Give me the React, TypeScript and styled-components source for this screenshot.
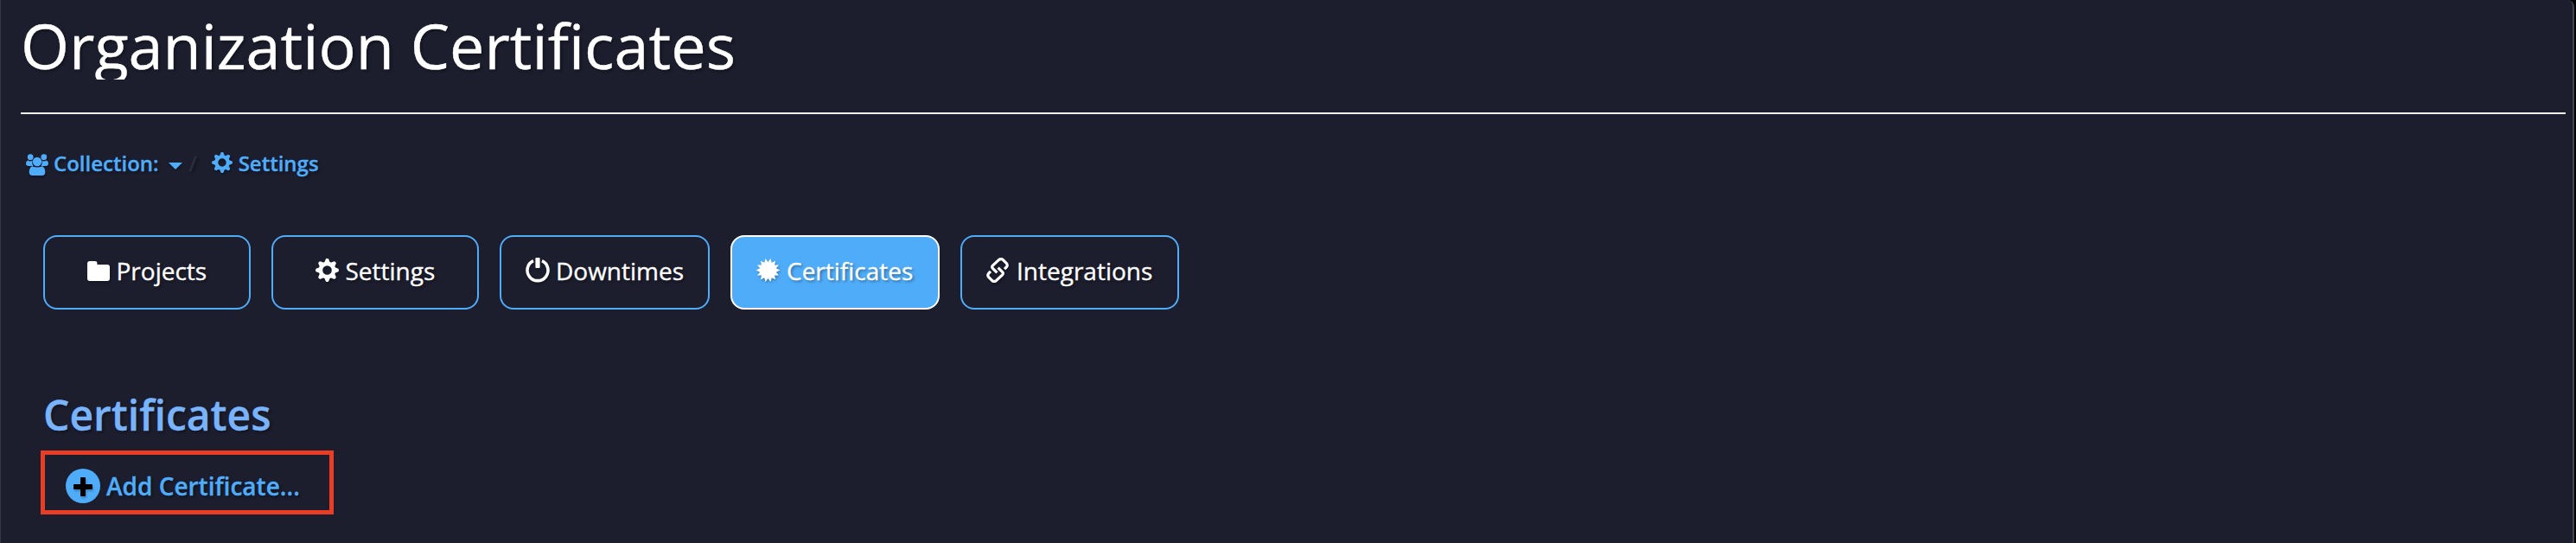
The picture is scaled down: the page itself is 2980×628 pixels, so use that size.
import React from "react";
import styled, { createGlobalStyle } from "styled-components";

const GlobalStyle = createGlobalStyle`
  * { box-sizing: border-box; }
  body { margin: 0; background: #000; font-family: "Open Sans", "Noto Sans", sans-serif; }
`;
const Panel = styled.main`
  width: 2978px;
  height: 628px;
  overflow: hidden;
  background: #1c1d2d;
  border-left: 1px solid #353645;
  border-right: 2px solid #41424f;
  border-top-right-radius: 8px;
  padding: 0 8px 0 23px;
  text-shadow: 2px 2px 3px rgba(0, 0, 0, 0.35);
  -webkit-text-stroke: 0.35px currentColor;
`;
const Header = styled.header`
  height: 132px;
  border-bottom: 2px solid #f3f5f3;
`;
const Title = styled.h1`
  margin: 0;
  height: 92px;
  overflow: hidden;
  font-size: 72px;
  line-height: 104px;
  font-weight: 400;
  color: #fff;
  white-space: nowrap;
`;
const Breadcrumb = styled.nav`
  display: flex;
  align-items: center;
  height: 36px;
  margin-top: 39px;
  padding-left: 6px;
  font-size: 24px;
  line-height: 36px;
  font-weight: 600;
  color: #4facf9;
`;
const CrumbLink = styled.a`
  display: flex;
  align-items: center;
  white-space: nowrap;
`;
const Slash = styled.span`
  width: 9px;
  margin: 0 17px 0 8px;
  font-weight: 400;
  color: #2f3040;
`;
const Icon = styled.svg<{ $w: number; $h: number; $gap?: number; $lift?: number }>`
  flex: none;
  width: ${(p) => p.$w}px;
  height: ${(p) => p.$h}px;
  margin-right: ${(p) => p.$gap ?? 0}px;
  margin-bottom: ${(p) => p.$lift ?? 0}px;
  fill: currentColor;
  overflow: visible;
  filter: drop-shadow(1px 2px 1px rgba(0, 0, 0, 0.25));
`;
const UsersIcon = styled(Icon)`
  margin-top: 2px;
`;
const Caret = styled(Icon)`
  margin: 6px 0 0 11px;
`;
const PlusIcon = styled(Icon)`
  margin-top: 2px;
`;
const Tabs = styled.div`
  display: flex;
  gap: 24px;
  margin: 65px 0 0 26px;
`;
const Tab = styled.button<{ $w: number; $active?: boolean }>`
  display: flex;
  align-items: center;
  justify-content: flex-start;
  width: ${(p) => p.$w}px;
  height: 86px;
  padding: 0 0 4px 28px;
  border: 2px solid ${(p) => (p.$active ? "#fff" : "#4facf9")};
  border-radius: 16px;
  background: ${(p) => (p.$active ? "#4facf9" : "transparent")};
  color: #fff;
  font: 400 28px/40px "Open Sans", "Noto Sans", sans-serif;
  text-shadow: inherit;
  white-space: nowrap;
`;
const Wide = styled(Tab)`
  padding-left: 48.5px;
`;
const Section = styled.section`
  margin: 90px 0 0 23px;
`;
const SectionTitle = styled.h2`
  margin: 0 0 9px 3px;
  font-size: 48px;
  line-height: 64px;
  font-weight: 600;
  color: #78b3fb;
`;
const Highlight = styled.div`
  display: flex;
  align-items: center;
  width: 339px;
  height: 74px;
  padding: 7px 0 0 24px;
  border: 5px solid #e93e25;
`;
const AddLink = styled.a`
  display: flex;
  align-items: center;
  font-size: 28px;
  line-height: 40px;
  font-weight: 600;
  color: #4facf9;
  white-space: nowrap;
`;
const PlusBadge = styled.span`
  display: grid;
  place-items: center;
  width: 40px;
  height: 40px;
  margin-right: 7px;
  border-radius: 50%;
  background: #4facf9;
  color: #000;
`;

const gearTeeth = [0, 45, 90, 135, 180, 225, 270, 315];
const Gear = ({ size, gap, lift }: { size: number; gap: number; lift: number }) => (
  <Icon $w={size} $h={size} $gap={gap} $lift={lift} viewBox="-13.5 -13.5 27 27">
    <circle r="7.6" fill="none" stroke="currentColor" strokeWidth="4.6" />
    {gearTeeth.map((a) => (
      <path key={a} transform={`rotate(${a})`} d="M-3.2-9 L-1.9-12.3 Q-1.7-13.4-.7-13.4 H.7 Q1.7-13.4 1.9-12.3 L3.2-9Z" />
    ))}
  </Icon>
);
const starPoints = Array.from({ length: 28 }, (_, i) => {
  const r = i % 2 ? 13.8 : 9.6;
  const a = (i * Math.PI) / 14;
  return `${(r * Math.sin(a)).toFixed(2)},${(-r * Math.cos(a)).toFixed(2)}`;
}).join(" ");

export default function App() {
  return (
    <>
      <GlobalStyle />
      <Panel>
        <Header>
          <Title>Organization Certificates</Title>
        </Header>
        <Breadcrumb>
          <CrumbLink>
            <UsersIcon $w={26} $h={25} $gap={6} viewBox="0 0 26 25">
              <circle cx="5.2" cy="3.7" r="3.4" />
              <circle cx="20.8" cy="3.7" r="3.4" />
              <path d="M2.3 7.6Q5 9.2 7.5 7.8Q6.6 11 8.4 14H3Q0 14 0 11Q0 8.5 2.3 7.6ZM23.7 7.6Q21 9.2 18.5 7.8Q19.4 11 17.6 14H23Q26 14 26 11Q26 8.5 23.7 7.6Z" />
              <circle cx="13" cy="9" r="5.2" />
              <path d="M7.2 14.2Q13 17 18.8 14.2Q22.3 16 22.3 21Q22.3 25 18.5 25H7.5Q3.7 25 3.7 21Q3.7 16 7.2 14.2Z" />
            </UsersIcon>
            Collection:
            <Caret $w={16} $h={8} viewBox="0 0 16 8">
              <path d="M0 0H16L8 8Z" />
            </Caret>
          </CrumbLink>
          <Slash>/</Slash>
          <CrumbLink>
            <Gear size={24} gap={7} lift={2} />
            Settings
          </CrumbLink>
        </Breadcrumb>
        <Tabs>
          <Wide $w={240}>
            <Icon $w={26} $h={23} $gap={8} viewBox="0 0 26 23">
              <path d="M3 0H9Q11.5 0 11.5 3V4H23Q26 4 26 7V20Q26 23 23 23H3Q0 23 0 20V3Q0 0 3 0Z" />
            </Icon>
            Projects
          </Wide>
          <Wide $w={240}>
            <Gear size={27} gap={8} lift={2} />
            Settings
          </Wide>
          <Tab $w={243}>
            <Icon $w={28} $h={28} $gap={7} $lift={2} viewBox="0 0 28 28">
              <path d="M9 3.7A12 12 0 1 0 19 3.7" fill="none" stroke="currentColor" strokeWidth="3.6" />
              <rect x="11.4" y="0" width="5.2" height="12" rx="1" />
            </Icon>
            Downtimes
          </Tab>
          <Tab $w={242} $active>
            <Icon $w={27} $h={27} $gap={8} $lift={2} viewBox="-13.5 -13.5 27 27">
              <polygon points={starPoints} />
            </Icon>
            Certificates
          </Tab>
          <Tab $w={253}>
            <Icon $w={26} $h={29} $gap={9} $lift={2} viewBox="0 0 26 29">
              <g fill="none" stroke="currentColor" strokeWidth="3.2" strokeLinejoin="round">
                <path d="M12.4 17.4L7.4 12.4Q5.9 10.8 7.4 9.2L14.4 2.6Q17 .6 19.4 2.6L23.2 6.4Q25.2 8.6 23.2 11L21 13.2" />
                <path d="M13.6 11.6L18.6 16.6Q20.1 18.2 18.6 19.8L11.6 26.4Q9 28.4 6.6 26.4L2.8 22.6Q.8 20.4 2.8 18L5 15.8" />
              </g>
            </Icon>
            Integrations
          </Tab>
        </Tabs>
        <Section>
          <SectionTitle>Certificates</SectionTitle>
          <Highlight>
            <AddLink>
              <PlusBadge>
                <PlusIcon $w={22} $h={22} viewBox="0 0 22 22">
                  <path d="M9 0H13Q14 0 14 1V8H21Q22 8 22 9V13Q22 14 21 14H14V21Q14 22 13 22H9Q8 22 8 21V14H1Q0 14 0 13V9Q0 8 1 8H8V1Q8 0 9 0Z" />
                </PlusIcon>
              </PlusBadge>
              Add Certificate...
            </AddLink>
          </Highlight>
        </Section>
      </Panel>
    </>
  );
}
